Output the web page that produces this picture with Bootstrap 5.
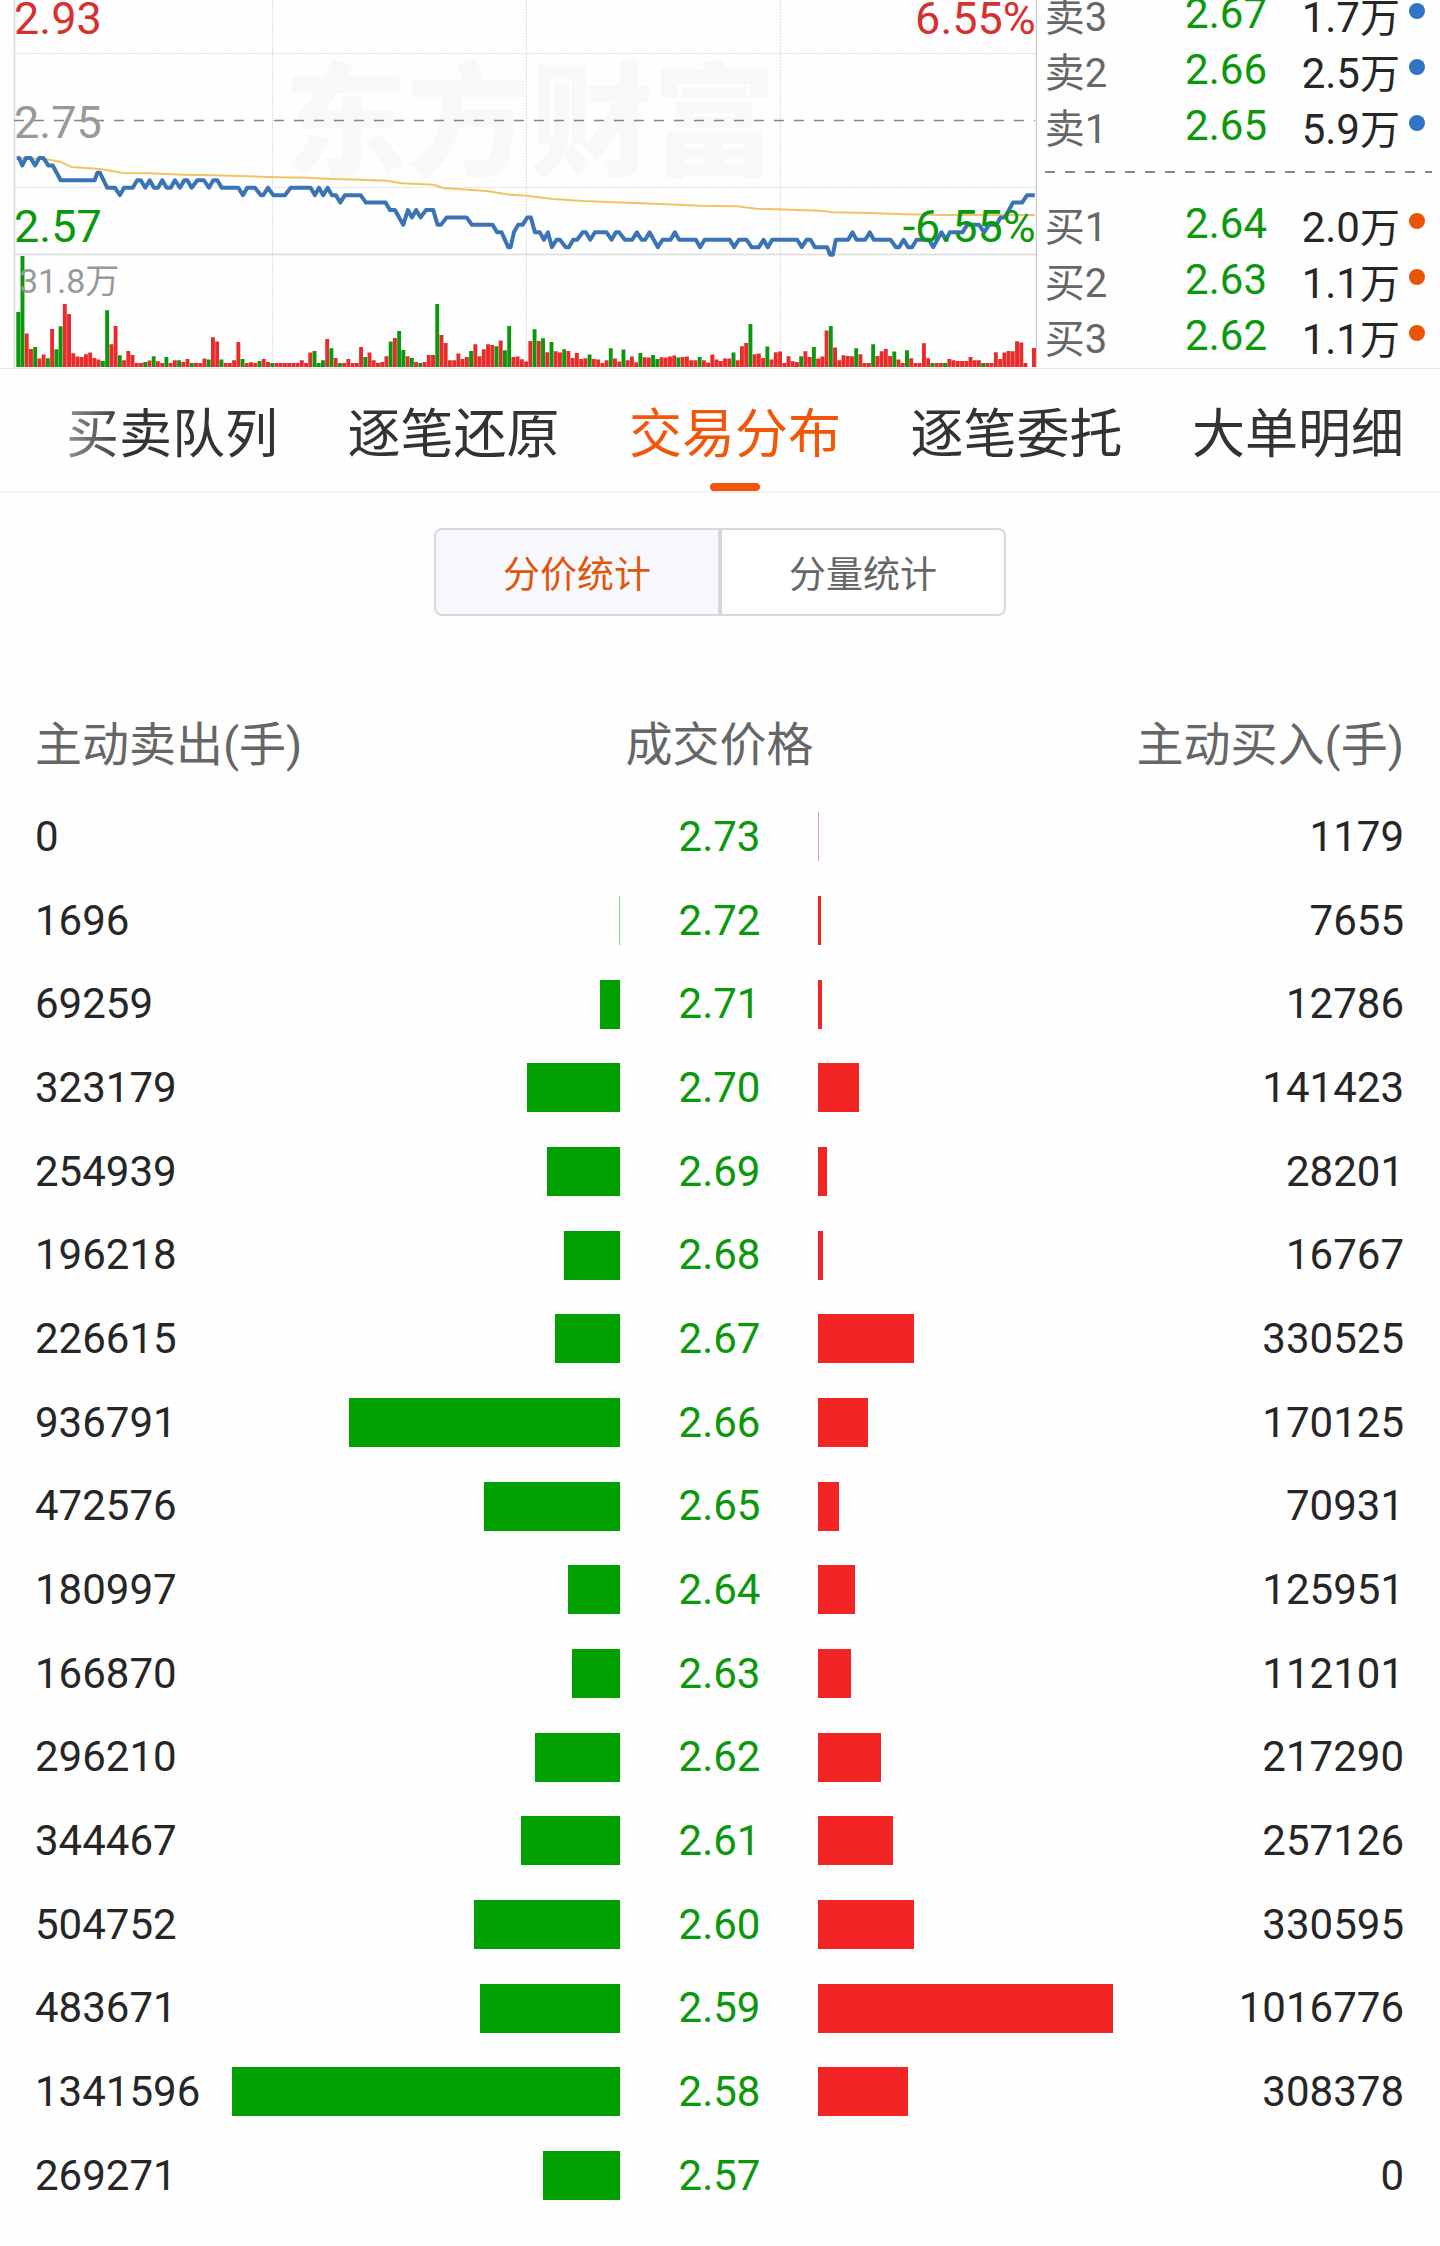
<!DOCTYPE html>
<html lang="zh-CN">
<head>
<meta charset="utf-8">
<meta name="viewport" content="width=device-width, initial-scale=1">
<title>交易分布</title>
<link href="https://cdn.jsdelivr.net/npm/bootstrap@5.3.0/dist/css/bootstrap.min.css" rel="stylesheet">
<style>
  :root { --up: #f32424; --down: #00a000; --down-text: #0c980c; --accent: #f2560a; --muted: #666; --rule: #e8e8ea; }
  body { font-family: Roboto, "Noto Sans CJK SC", sans-serif; color: #262626; background: #fefefe; }

  .quote-panel { border-bottom: 1px solid var(--rule); }
  .chart-pane { flex: 0 0 72%; }
  .chart-pane svg { width: 100%; height: auto; }
  .axis-label { font-size: 45px; }
  .volume-label { font-size: 34px; }
  .brand-mark { font-size: 123px; font-weight: 900; }

  .book-pane { overflow: hidden; }
  .order-book { width: 100%; margin-top: -11px; table-layout: fixed; line-height: 1; }
  .order-book td, .order-book th { height: 56px; padding: 0; font-weight: 400; white-space: nowrap; }
  .order-book .side-name { padding: 2px 0 0 8px; font-size: 40px; color: var(--muted); }
  .order-book .quote-price { padding-bottom: 6px; font-size: 42px; color: var(--down-text); }
  .order-book .quote-size { padding-top: 2px; font-size: 42px; }
  .quote-size span { font-size: 40px; }
  .order-book .side-dot { padding: 14px 0 0 9px; vertical-align: top; }
  .side-dot i { display: block; width: 16px; height: 16px; border-radius: 50%; background: #3173c4; }
  .buy-side .side-dot i { background: #ea5504; }
  .order-book .book-gap { height: 42px; padding: 14px 8px 0; vertical-align: top; }
  .book-gap div { height: 2px; background: repeating-linear-gradient(90deg, #8a8a8a 0 10px, transparent 10px 20px); }

  .section-tabs { position: relative; padding: 0 36px 0 66px; border-bottom: 2px solid #f0f0f2; }
  .section-tabs::before { content: ""; position: absolute; z-index: 1; inset: 0 auto 0 0; width: 125px; pointer-events: none; background: linear-gradient(90deg, #fefefe, rgba(254, 254, 254, 0)); }
  .section-tabs .nav-link { position: relative; padding: 10px 0 0; font-size: 53px; line-height: 112px; color: #333; }
  .section-tabs .nav-link.active { color: var(--accent); }
  .section-tabs .nav-link.active::after { content: ""; position: absolute; left: 50%; bottom: 0; width: 50px; height: 8px; margin-left: -25px; border-radius: 4px; background: var(--accent); }

  .mode-switch { max-width: 572px; margin-top: 35px; }
  .mode-switch .btn { flex: 1 1 0; height: 88px; padding: 8px 0 0; border: 2px solid #d5d8de; border-radius: 8px; font-size: 37px; color: var(--muted); background: #fff; }
  .mode-switch .btn.active { color: #e0560f; border-color: #d5d8de; background: #f6f8fb; }
  .mode-switch.btn-group > .btn + .btn { margin-left: 0; }

  .dist-wrap { padding: 79px 36px 28px 35px; }
  .dist-table { width: 100%; table-layout: fixed; line-height: 1; font-size: 42px; }
  .dist-table th, .dist-table td { padding: 0; font-weight: 400; white-space: nowrap; }
  .dist-table thead th { height: 100px; font-size: 47px; color: var(--muted); }
  .dist-table tbody td, .dist-table tbody th { height: 84px; }
  .dist-table tbody tr:nth-child(3n) > * { height: 83px; }
  .dist-table tbody th { color: var(--down-text); }
  .col-amount { width: 197px; }
  .col-price { width: 198px; }
  .vol-bar { height: 49px; min-width: 1px; }
  .vol-bar.sold { background: var(--down); }
  .vol-bar.bought { background: var(--up); }
  .vol-bar.faint { opacity: .45; }
</style>
</head>
<body>

<section class="quote-panel d-flex">
  <div class="chart-pane">
    <svg class="d-block" viewBox="0 0 1037 368" role="img" aria-label="分时走势">
      <text class="brand-mark" x="284" y="166" fill="#f8f8f8">东方财富</text>
      <g stroke="#dcdcde" fill="none">
        <path d="M14 53.5H1036M14 187.5H1036M272.5 0V368M526.5 0V368M780.5 0V368" stroke-dasharray="2 1"/>
        <path d="M14.5 0V368M14 254.5H1036" stroke-width="1.5"/>
        <path d="M1036.5 0V368" stroke="#bdbdc0"/>
      </g>
      <path d="M14 120.5H1035" stroke="#858585" stroke-width="1.6" stroke-dasharray="10 10"/>
      <path id="vol-up" fill="#e82c2c"/>
      <path id="vol-down" fill="#0c980c"/>
      <path id="avg-line" fill="none" stroke="#f0c466" stroke-width="2"/>
      <path id="price-line" fill="none" stroke="#3a74b6" stroke-width="4" stroke-linejoin="round"/>
      <g class="axis-label">
        <text x="14" y="34" fill="#d63030">2.93</text>
        <text x="14" y="138" fill="#999">2.75</text>
        <text x="14" y="242" fill="#0c980c">2.57</text>
        <text x="1036" y="34" fill="#d63030" text-anchor="end">6.55%</text>
        <text x="1036" y="242" fill="#0c980c" text-anchor="end">-6.55%</text>
      </g>
      <text class="volume-label" x="19" y="293" fill="#999">31.8万</text>
    </svg>
  </div>

  <div class="book-pane flex-grow-1">
    <table class="order-book">
      <colgroup><col><col style="width:124px"><col style="width:133px"><col style="width:40px"></colgroup>
      <tbody>
        <tr><th class="side-name" scope="row">卖3</th><td class="quote-price text-end">2.67</td><td class="quote-size text-end">1.7<span>万</span></td><td class="side-dot"><i></i></td></tr>
        <tr><th class="side-name" scope="row">卖2</th><td class="quote-price text-end">2.66</td><td class="quote-size text-end">2.5<span>万</span></td><td class="side-dot"><i></i></td></tr>
        <tr><th class="side-name" scope="row">卖1</th><td class="quote-price text-end">2.65</td><td class="quote-size text-end">5.9<span>万</span></td><td class="side-dot"><i></i></td></tr>
        <tr><td class="book-gap" colspan="4"><div></div></td></tr>
      </tbody>
      <tbody class="buy-side">
        <tr><th class="side-name" scope="row">买1</th><td class="quote-price text-end">2.64</td><td class="quote-size text-end">2.0<span>万</span></td><td class="side-dot"><i></i></td></tr>
        <tr><th class="side-name" scope="row">买2</th><td class="quote-price text-end">2.63</td><td class="quote-size text-end">1.1<span>万</span></td><td class="side-dot"><i></i></td></tr>
        <tr><th class="side-name" scope="row">买3</th><td class="quote-price text-end">2.62</td><td class="quote-size text-end">1.1<span>万</span></td><td class="side-dot"><i></i></td></tr>
      </tbody>
    </table>
  </div>
</section>

<nav class="section-tabs nav flex-nowrap justify-content-between text-nowrap">
  <a class="nav-link" href="#">买卖队列</a>
  <a class="nav-link" href="#">逐笔还原</a>
  <a class="nav-link active" href="#" aria-current="page">交易分布</a>
  <a class="nav-link" href="#">逐笔委托</a>
  <a class="nav-link" href="#">大单明细</a>
</nav>

<main>
  <div class="mode-switch btn-group d-flex mx-auto" role="group" aria-label="统计方式">
    <button type="button" class="btn active" aria-pressed="true">分价统计</button>
    <button type="button" class="btn" aria-pressed="false">分量统计</button>
  </div>

  <div class="dist-wrap">
    <table class="dist-table">
      <colgroup><col class="col-amount"><col><col class="col-price"><col><col class="col-amount"></colgroup>
      <thead>
        <tr>
          <th scope="col" colspan="2">主动卖出(手)</th>
          <th scope="col" class="text-center">成交价格</th>
          <th scope="col" colspan="2" class="text-end">主动买入(手)</th>
        </tr>
      </thead>
      <tbody id="dist-rows"></tbody>
    </table>
  </div>
</main>

<script src="https://cdn.jsdelivr.net/npm/bootstrap@5.3.0/dist/js/bootstrap.bundle.min.js"></script>
<script>
  // [sold, price, bought]
  const rows = [
    [0, '2.73', 1179], [1696, '2.72', 7655], [69259, '2.71', 12786], [323179, '2.70', 141423],
    [254939, '2.69', 28201], [196218, '2.68', 16767], [226615, '2.67', 330525], [936791, '2.66', 170125],
    [472576, '2.65', 70931], [180997, '2.64', 125951], [166870, '2.63', 112101], [296210, '2.62', 217290],
    [344467, '2.61', 257126], [504752, '2.60', 330595], [483671, '2.59', 1016776], [1341596, '2.58', 308378],
    [269271, '2.57', 0]
  ];
  const peak = Math.max(...rows.flatMap(r => [r[0], r[2]]));
  const bar = (v, kind) => v ? `<div class="vol-bar ${kind}${v < 2000 ? ' faint' : ''}" style="width:${(v / peak * 100).toFixed(2)}%"></div>` : '';
  document.getElementById('dist-rows').innerHTML = rows.map(([s, p, b]) =>
    `<tr><td>${s}</td><td>${bar(s, 'sold ms-auto')}</td><th scope="row" class="text-center">${p}</th><td>${bar(b, 'bought')}</td><td class="text-end">${b}</td></tr>`).join('');

  // Minute volumes, in thirds of a unit; "g" marks a falling minute.
  const volumes = `165g 333g 100 54 60g 25 37 26g 114 53g 122g 189 159 41 31 30 38 43 27 22 18g 170g 68 123 35g 20 48 36 12 12
    15g 19 32g 17 12 30g 12 20 20g 15 24 12g 12 12 25 22g 89 76 22g 12 12 20 75 24g 12 14 12 18g 24 15
    12g 12 12 12 12 12 12 20 12 43 48g 12g 20g 84 56g 27 12g 12 24 12 12 60 30g 43 20 12 15 32 76g 87
    108g 51g 32 27g 15 12g 15 36 36 189g 96 72 20 20 40 24 30 48g 68 32 53 68 66 62g 79 50g 123g 30 31 23
    16 78 113g 78 86g 44 75g 47 43 53g 48 27 42 24 26 37g 24 22 12 20 56g 25 16 52g 20 31 14 42g 29 28
    36g 24g 29 28 31 34 28g 30 31 20 20 30g 20 13 37 22 18 25 25 43g 20 62 72 129g 38 40 27 61g 22 44
    46 12 32 17 15 32g 47 30 60g 25 31 109 123g 58 20 35 33 32 56g 38 12 12 68g 33 47 54 33 46g 22 12
    50g 26 12 12 71 26 12g 12 12 12g 24 20 18 18 18 30 20 20 12g 12 12 44 24 43 48 47 77 73 12 0 57`.trim().split(/\s+/);
  const paths = { up: '', down: '' };
  volumes.forEach((v, i) => {
    const h = parseInt(v) / 3, x = 16.3 + i * 4.233;
    paths[v.endsWith('g') ? 'down' : 'up'] += `M${x.toFixed(2)} 367v${(-h).toFixed(2)}h3.9v${h.toFixed(2)}z`;
  });
  document.getElementById('vol-up').setAttribute('d', paths.up);
  document.getElementById('vol-down').setAttribute('d', paths.down);

  // Price line: x, ticks above 2.57.
  const price = `50,13 57,13 67,12 78,13 92,13 105,12 118,13 130,13 145,12 158,12 182,10 284,10 292,11 300,11 322,9 345,9 360,8 372,9 398,9 412,10 422,10 436,9 449,10 462,9 474,9 487,10 500,9 512,9 525,10 540,9 553,10 562,10 575,9 592,10 612,10 627,9 640,10 652,10 665,9 715,9 729,8 742,9 765,9 783,8 790,8 804,9 820,8 855,8 872,9 932,9 945,8 957,9 970,8 983,9 996,8 1008,8 1021,7 1035,8
    1082,8 1098,7 1157,7 1170,6 1185,6 1210,4 1224,6 1236,5 1249,6 1262,5 1278,6 1300,6 1313,4 1323,4 1340,5 1400,5 1416,4 1478,4 1492,3 1505,3 1525,1 1532,1 1542,3 1555,4 1568,4 1582,5 1593,5 1605,3 1620,3 1632,2 1644,3 1656,1 1670,2 1680,2 1697,1 1707,1 1720,2 1732,2 1748,3 1758,3 1771,2 1785,3 1820,3 1835,2 1848,3 1858,3 1875,2 1897,2 1911,3 1925,2 1936,2 1949,3 1974,1 1988,2 2012,2 2025,3 2038,2
    2088,2 2101,1 2114,2 2190,2 2203,1 2217,2 2240,2 2255,1 2277,1 2291,2 2304,1 2317,2 2392,2 2406,1 2420,2 2432,2 2445,1 2482,1 2491,0 2499,0 2508,2 2545,2 2558,3 2570,2 2596,2 2610,3 2622,2 2672,2 2688,1 2698,1 2711,2 2725,1 2737,1 2750,2 2788,2 2800,1 2825,3 2838,2 2850,3 2888,3 2902,4 2938,4 2953,3 2968,4 2990,4 3002,5 3015,5 3040,7 3067,7 3082,8 3105,8`;
  const line = (src, toY) => 'M' + src.trim().split(/\s+/).map(p => {
    const [x, y] = p.split(',').map(Number);
    return (x / 3).toFixed(1) + ' ' + toY(y).toFixed(1);
  }).join('L');
  document.getElementById('price-line').setAttribute('d', line(price, k => (764 - 22.3 * k) / 3));

  const average = `60,474 140,478 180,485 215,501 300,507 370,519 450,520 550,524 640,526 800,531 920,533 1000,537 1080,539 1160,542 1205,550 1300,554 1330,564 1460,573 1530,584 1580,587 1660,597 1750,603 1880,608 2000,613 2100,617 2210,619 2270,626 2460,632 2500,637 2610,639 2710,643 2830,645 3105,645`;
  document.getElementById('avg-line').setAttribute('d', line(average, y => y / 3));
</script>
</body>
</html>
